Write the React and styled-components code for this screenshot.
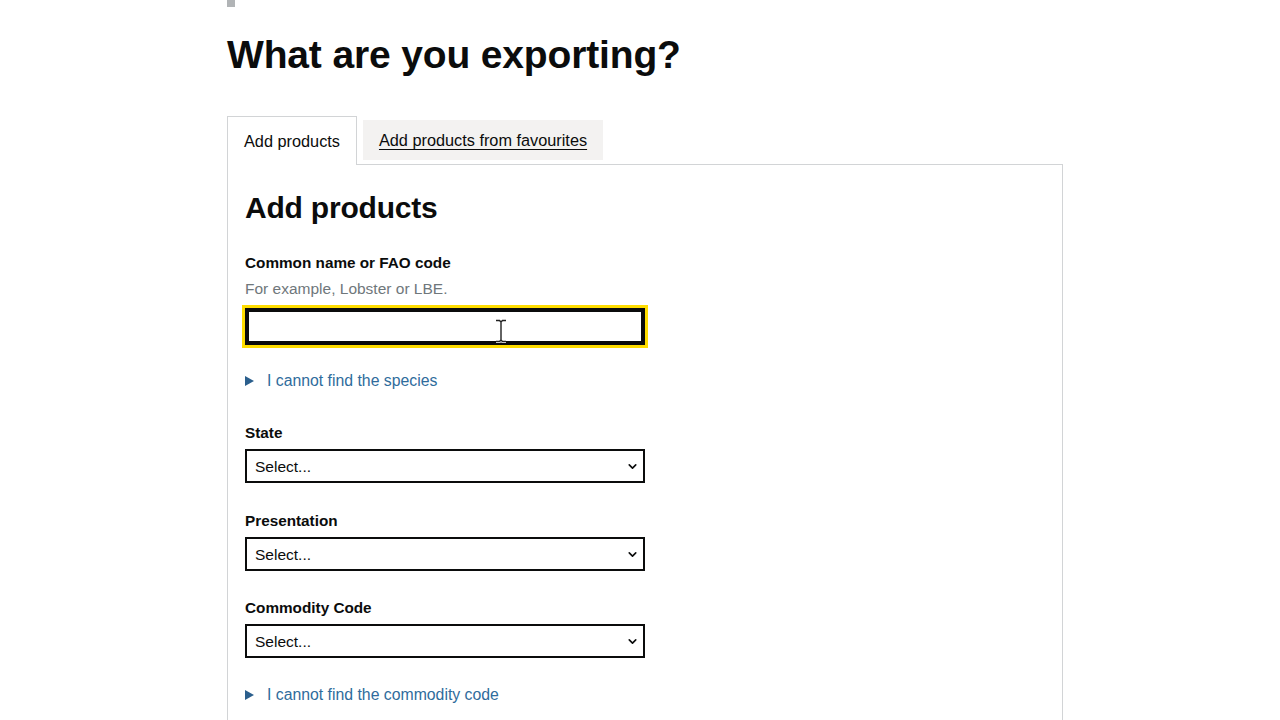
import React from "react";
import styled, { createGlobalStyle } from "styled-components";
import { ChevronDown } from "lucide-react";

const Global = createGlobalStyle`
  html, body { margin: 0; padding: 0; background: #ffffff; }
  body {
    font-family: "Liberation Sans", Arial, sans-serif;
    color: #0b0c0c;
    -webkit-font-smoothing: antialiased;
  }
  * { box-sizing: border-box; }
`;

const Page = styled.div`
  width: 1280px;
  height: 720px;
  overflow: hidden;
  padding-left: 227px;
`;

const Container = styled.div`
  width: 836px;
`;

const CutBar = styled.div`
  width: 8px;
  height: 7px;
  background: #b1b4b6;
`;

const Title = styled.h1`
  margin: 26px 0 0 0;
  font-size: 39px;
  line-height: 44px;
  font-weight: 700;
  letter-spacing: -0.15px;
`;

const TabList = styled.div`
  display: flex;
  align-items: flex-start;
  margin-top: 39px;
  height: 48px;
  position: relative;
  z-index: 1;
`;

const Tab = styled.a`
  display: block;
  font-size: 16.3px;
  line-height: 20px;
  color: #0b0c0c;
  ${(p) =>
    p.$selected
      ? `
    padding: 14px 16px 14px 16px;
    border: 1px solid #d2d4d6;
    border-bottom: none;
    background: #ffffff;
    text-decoration: none;
  `
      : `
    margin-top: 4px;
    margin-left: 6px;
    padding: 10px 16px;
    background: #f3f2f1;
    text-decoration: underline;
    text-underline-offset: 3px;
    text-decoration-thickness: 1px;
  `}
`;

const Panel = styled.div`
  border: 1px solid #d2d4d6;
  border-bottom: none;
  padding: 26px 17px 40px 17px;
  height: 560px;
`;

const PanelHeading = styled.h2`
  margin: 0;
  font-size: 30px;
  line-height: 34px;
  font-weight: 700;
  letter-spacing: -0.2px;
`;

const Field = styled.div`
  margin-top: ${(p) => p.$top || 27}px;
`;

const Label = styled.label`
  display: block;
  font-size: 15.3px;
  line-height: 20px;
  font-weight: 700;
`;

const Hint = styled.div`
  margin-top: 6px;
  font-size: 15.5px;
  line-height: 20px;
  color: #6f777b;
`;

const InputWrap = styled.div`
  position: relative;
  margin-top: 9px;
  width: 400px;
`;

const TextInput = styled.input`
  display: block;
  width: 400px;
  height: 37px;
  border: 2px solid #0b0c0c;
  box-shadow: inset 0 0 0 2px #0b0c0c;
  outline: 3px solid #ffdd00;
  outline-offset: 0;
  padding: 5px 8px;
  font: inherit;
  font-size: 16px;
  background: #fff;
  border-radius: 0;
`;

const Cursor = styled.svg`
  position: absolute;
  left: 250px;
  top: 11px;
  pointer-events: none;
`;

const Summary = styled.div`
  display: flex;
  align-items: center;
  margin-top: ${(p) => p.$top || 25}px;
  font-size: 15.8px;
  line-height: 20px;
  color: #2f6c9c;
`;

const Triangle = styled.span`
  width: 0;
  height: 0;
  border-top: 5px solid transparent;
  border-bottom: 5px solid transparent;
  border-left: 9px solid #2b5f8d;
  margin-right: 13px;
`;

const SelectWrap = styled.div`
  position: relative;
  margin-top: 6px;
  width: 400px;
`;

const Select = styled.select`
  display: block;
  width: 400px;
  height: 34px;
  appearance: none;
  -webkit-appearance: none;
  border: 2px solid #0b0c0c;
  border-radius: 0;
  background: #fff;
  padding: 0 30px 0 8px;
  font-family: "Liberation Sans", Arial, sans-serif;
  font-size: 15.5px;
  color: #0b0c0c;
`;

const Chevron = styled.span`
  position: absolute;
  right: 6px;
  top: 11px;
  display: flex;
  pointer-events: none;
  color: #0b0c0c;
`;

function SelectField({ label, top }) {
  return (
    <Field $top={top}>
      <Label>{label}</Label>
      <SelectWrap>
        <Select defaultValue="">
          <option value="">Select...</option>
        </Select>
        <Chevron>
          <ChevronDown size={13} strokeWidth={3} />
        </Chevron>
      </SelectWrap>
    </Field>
  );
}

export default function App() {
  return (
    <Page>
      <Global />
      <Container>
        <CutBar />
        <Title>What are you exporting?</Title>
        <TabList>
          <Tab $selected href="#">Add products</Tab>
          <Tab href="#">Add products from favourites</Tab>
        </TabList>
        <Panel>
          <PanelHeading>Add products</PanelHeading>
          <Field $top={28}>
            <Label>Common name or FAO code</Label>
            <Hint>For example, Lobster or LBE.</Hint>
            <InputWrap>
              <TextInput type="text" />
              <Cursor width="12" height="24" viewBox="0 0 12 24">
                <path d="M1 1.5 H4.5 L6 3 L7.5 1.5 H11 M6 3 V21 M1 22.5 H4.5 L6 21 L7.5 22.5 H11" fill="none" stroke="#ffffff" strokeWidth="3" />
                <path d="M1 1.5 H4.5 L6 3 L7.5 1.5 H11 M6 3 V21 M1 22.5 H4.5 L6 21 L7.5 22.5 H11" fill="none" stroke="#222" strokeWidth="1.4" />
              </Cursor>
            </InputWrap>
          </Field>
          <Summary $top={26}>
            <Triangle />I cannot find the species
          </Summary>
          <SelectField label="State" top={32} />
          <SelectField label="Presentation" top={28} />
          <SelectField label="Commodity Code" top={27} />
          <Summary $top={27}>
            <Triangle />I cannot find the commodity code
          </Summary>
        </Panel>
      </Container>
    </Page>
  );
}
